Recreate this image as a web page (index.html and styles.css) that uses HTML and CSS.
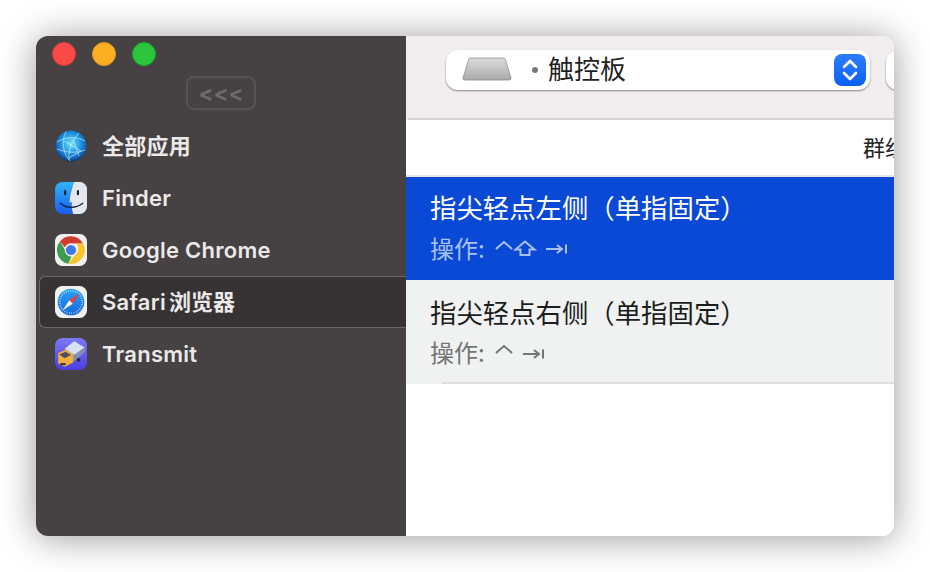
FILE: index.html
```html
<!DOCTYPE html>
<html lang="zh-CN">
<head>
  <meta charset="UTF-8">
  <title>触控板</title>
  <link rel="stylesheet" href="styles.css">
</head>
<body>
  <div class="window">

    <!-- Sidebar -->
    <aside class="sidebar">
      <div class="lights">
        <span class="light red"></span>
        <span class="light yellow"></span>
        <span class="light green"></span>
      </div>
      <button class="collapse">&lt;&lt;&lt;</button>

      <ul class="apps">
        <li class="app">
          <svg class="app-icon" viewBox="0 0 32 32">
            <defs>
              <radialGradient id="globe" cx="50%" cy="42%" r="60%">
                <stop offset="0" stop-color="#6fe4f4"/>
                <stop offset="0.55" stop-color="#1f92e4"/>
                <stop offset="0.85" stop-color="#125aa8"/>
                <stop offset="1" stop-color="#0a2c50"/>
              </radialGradient>
            </defs>
            <circle cx="16" cy="16" r="15.5" fill="url(#globe)"/>
            <g fill="none" stroke="#d4f6fc" stroke-width="0.8" opacity="0.8">
              <path d="M2 12 C10 7 22 6 30 11"/>
              <path d="M11 1.5 C6 12 8 23 15 31"/>
              <path d="M24 3 C17 10 13 20 14 30"/>
              <path d="M9 11 L26 21 L14 28"/>
              <path d="M18 9 L24 26"/>
              <path d="M2 19 C10 22 20 24 30 20"/>
            </g>
          </svg>
          <span class="app-name cjk">全部应用</span>
        </li>
        <li class="app">
          <svg class="app-icon" viewBox="1 1 30 30">
            <defs>
              <linearGradient id="finderBlue" x1="0" y1="0" x2="0" y2="1">
                <stop offset="0" stop-color="#2fb4f6"/>
                <stop offset="1" stop-color="#1a5cf0"/>
              </linearGradient>
              <clipPath id="finderClip"><rect x="1" y="1" width="30" height="30" rx="7"/></clipPath>
            </defs>
            <g clip-path="url(#finderClip)">
              <rect x="1" y="1" width="30" height="30" fill="url(#finderBlue)"/>
              <path d="M19 1 H31 V31 H18 C17 27 16.5 24 16.8 20 H14.6 C15 13 17 7 19 1 Z" fill="#e4e8ee"/>
            </g>
            <rect x="9.5" y="8.5" width="2" height="5" rx="1" fill="#14233f"/>
            <rect x="21.5" y="8.5" width="2" height="5" rx="1" fill="#14233f"/>
            <path d="M6 21 C11 26 21 26 27 21" fill="none" stroke="#14233f" stroke-width="1.3" stroke-linecap="round"/>
          </svg>
          <span class="app-name">Finder</span>
        </li>
        <li class="app">
          <svg class="app-icon" viewBox="1 1 30 30">
            <rect x="1" y="1" width="30" height="30" rx="7" fill="#f1f1f1"/>
            <path d="M16 3 A13 13 0 0 1 27.4 10 H16 A6 6 0 0 0 10.4 13.6 L5.6 8 A13 13 0 0 1 16 3 Z" fill="#d23c30"/>
            <path d="M5.6 8 L11 16.6 A6 6 0 0 0 16.5 22 L13.4 28.8 A13 13 0 0 1 5.6 8 Z" fill="#3f9c4a"/>
            <path d="M27.4 10 A13 13 0 0 1 13.4 28.8 L20.6 19.6 A6 6 0 0 0 20.5 10 Z" fill="#f8c72e"/>
            <circle cx="16" cy="16" r="6" fill="#f1f1f1"/>
            <circle cx="16" cy="16" r="4.8" fill="#3f78e8"/>
          </svg>
          <span class="app-name">Google Chrome</span>
        </li>
        <li class="app active">
          <svg class="app-icon" viewBox="1 1 30 30">
            <defs>
              <linearGradient id="safariBlue" x1="0" y1="0" x2="0" y2="1">
                <stop offset="0" stop-color="#2aa4f4"/>
                <stop offset="1" stop-color="#1466d8"/>
              </linearGradient>
            </defs>
            <rect x="1" y="1" width="30" height="30" rx="7" fill="#f0f0f0"/>
            <circle cx="16" cy="16" r="12.5" fill="url(#safariBlue)"/>
            <circle cx="16" cy="16" r="10.5" fill="none" stroke="#d9ecfb" stroke-width="1.6" stroke-dasharray="0.7 1.5"/>
            <path d="M24 8 L14.4 14.4 L17.6 17.6 Z" fill="#ee3b36"/>
            <path d="M8 24 L14.4 14.4 L17.6 17.6 Z" fill="#f4f4f4"/>
          </svg>
          <span class="app-name cjk">Safari<span class="name-cjk">浏览器</span></span>
        </li>
        <li class="app">
          <svg class="app-icon" viewBox="1 1 30 30">
            <defs>
              <linearGradient id="transmitBg" x1="0" y1="0" x2="0" y2="1">
                <stop offset="0" stop-color="#7d78f4"/>
                <stop offset="1" stop-color="#4a3fe0"/>
              </linearGradient>
            </defs>
            <rect x="1" y="1" width="30" height="30" rx="7" fill="url(#transmitBg)"/>
            <path d="M10 11 L19 4 L29 10 L19 17 Z" fill="#d5e2f4"/>
            <path d="M16 15.5 L19 17 L29 10 V14 L19 23 L16 21 Z" fill="#7f92b4"/>
            <path d="M4 15 L11 12 L18 16 V24 L10 28 L4 25 Z" fill="#f2ae3a"/>
            <path d="M5 16.5 L11 14 L16 17 L10 20 Z" fill="#4b4f60"/>
            <rect x="6" y="24.5" width="5" height="2" fill="#3a3340"/>
            <circle cx="23" cy="21.5" r="1.8" fill="#2a2a38"/>
          </svg>
          <span class="app-name">Transmit</span>
        </li>
      </ul>
    </aside>

    <!-- Main pane -->
    <main class="pane">
      <div class="toolbar">
        <div class="controls">
          <div class="select">
            <svg class="trackpad" viewBox="0 0 50 24">
              <defs>
                <linearGradient id="pad" x1="0" y1="0" x2="0" y2="1">
                  <stop offset="0" stop-color="#dcdcdc"/>
                  <stop offset="1" stop-color="#a9a9a9"/>
                </linearGradient>
              </defs>
              <path d="M8 1 H41 Q43 1 43.5 3 L49 21 Q49.5 23 47 23 H3 Q0.5 23 1 21 L6.5 3 Q7 1 8 1 Z" fill="url(#pad)" stroke="#8e8e8e" stroke-width="0.8"/>
            </svg>
            <span class="dot"></span>
            <span class="select-label">触控板</span>
            <span class="stepper">
              <svg viewBox="0 0 32 32">
                <path d="M10 13 L16 7 L22 13 M10 19 L16 25 L22 19" fill="none" stroke="#fff" stroke-width="2.6" stroke-linecap="round" stroke-linejoin="round"/>
              </svg>
            </span>
          </div>
          <div class="select"></div>
        </div>
        <div class="toolbar-line"></div>
      </div>

      <div class="table-head">
        <span class="group-label">群组</span>
      </div>

      <div class="row selected">
        <div class="row-title">指尖轻点左侧（单指固定）</div>
        <div class="row-sub">
          <span>操作:</span>
          <svg class="keys" width="72" height="16" viewBox="0 0 72 16" role="img" aria-label="⌃⇧ ⇥">
            <path d="M1 9 L9 2 L17 9"/>
            <path d="M30 1.5 L39.5 9.5 H34.5 V15 H25.5 V9.5 H20.5 Z"/>
            <path d="M51 9 H67 M62 5 L67 9 L62 13 M71 4.5 V13.5"/>
          </svg>
        </div>
      </div>
      <div class="row">
        <div class="row-title">指尖轻点右侧（单指固定）</div>
        <div class="row-sub">
          <span>操作:</span>
          <svg class="keys" width="49" height="16" viewBox="0 0 49 16" role="img" aria-label="⌃ ⇥">
            <path d="M1 9 L9 2 L17 9"/>
            <path d="M28 10 H44 M39 6 L44 10 L39 14 M48 5.5 V14.5"/>
          </svg>
        </div>
        <div class="row-line"></div>
      </div>
    </main>

  </div>
</body>
</html>
```
FILE: styles.css
```css
* {
  box-sizing: border-box;
}

html, body {
  margin: 0;
  height: 100%;
  overflow: hidden;
  background: #fff;
}

body {
  padding: 36px;
  font-family: "Inter", "Noto Sans CJK SC", sans-serif;
}

/* Window */
.window {
  display: flex;
  width: 858px;
  height: 500px;
  border-radius: 12px;
  overflow: hidden;
  box-shadow: 0 2px 36px rgba(0, 0, 0, 0.4);
}

/* Sidebar */
.sidebar {
  width: 370px;
  flex-shrink: 0;
  background: #464142;
  padding-top: 6px;
}

.lights {
  display: flex;
  gap: 16px;
  padding-left: 16px;
}

.light {
  width: 24px;
  height: 24px;
  border-radius: 50%;
}

.red { background: #fc4a47; border: 1px solid #e0393a; }
.yellow { background: #fdaf24; border: 1px solid #e09a1c; }
.green { background: #2ac53c; border: 1px solid #22a832; }

.collapse {
  display: block;
  width: 70px;
  height: 34px;
  margin: 10px 0 10px 150px;
  padding: 0;
  background: none;
  border: 2px solid #575353;
  border-radius: 8px;
  color: #6f6b6b;
  font-family: "Inter", sans-serif;
  font-size: 22px;
  font-weight: 700;
  line-height: 30px;
}

.apps {
  list-style: none;
  margin: 0;
  padding: 0;
}

.app {
  display: flex;
  align-items: center;
  height: 52px;
  padding-left: 19px;
  gap: 15px;
}

.app.active {
  margin-left: 3px;
  padding-left: 15px;
  background: #373334;
  border: 1px solid #6b6868;
  border-right: none;
  border-radius: 6px 0 0 6px;
}

.app-icon {
  width: 32px;
  height: 32px;
  flex-shrink: 0;
}

.app-name {
  color: #ebe9e9;
  font-size: 22px;
  font-weight: 600;
  letter-spacing: 0.25px;
  white-space: nowrap;
}

/* names with CJK sit lower in their line box */
.app-name.cjk {
  padding-bottom: 5px;
}

.name-cjk {
  margin-left: 3px;
  letter-spacing: 0;
}

/* Main pane */
.pane {
  flex: 1;
  min-width: 0;
  background: #fff;
  overflow: hidden;
}

.toolbar {
  display: flex;
  flex-direction: column;
  justify-content: space-between;
  height: 84px;
  padding-top: 14px;
  background: #f2edef;
}

.controls {
  display: flex;
  gap: 16px;
  padding-left: 40px;
}

.toolbar-line {
  height: 2px;
  margin-left: 2px;
  background: #d6d1d3;
}

.select {
  display: flex;
  align-items: center;
  flex-shrink: 0;
  width: 424px;
  height: 40px;
  padding: 0 4px 0 16px;
  background: #fff;
  border-radius: 12px;
  box-shadow: 0 1px 2px rgba(0, 0, 0, 0.45);
}

.trackpad {
  width: 50px;
  height: 24px;
  margin-bottom: 3px;
}

.dot {
  width: 6px;
  height: 6px;
  margin-left: 20px;
  border-radius: 50%;
  background: #777;
}

.select-label {
  margin-left: 10px;
  padding-bottom: 6px;
  color: #1f1f1f;
  font-family: "Noto Sans CJK SC", sans-serif;
  font-size: 26px;
}

.stepper {
  width: 32px;
  height: 32px;
  margin-left: auto;
  border-radius: 8px;
  background: linear-gradient(#2b7dff, #0a60f2);
}

.stepper svg {
  display: block;
}

.table-head {
  height: 57px;
  padding: 10px 0 0 457px;
  border-bottom: 2px solid #e8e6e7;
  white-space: nowrap;
}

.group-label {
  color: #222;
  font-family: "Noto Sans CJK SC", sans-serif;
  font-size: 22px;
}

/* Rows */
.row {
  display: flex;
  flex-direction: column;
  height: 104px;
  padding-top: 13px;
  background: #f0f2f2;
  color: #1d1d1d;
}

.row.selected {
  height: 103px;
  padding-top: 11px;
  background: #0a48d6;
  color: #fff;
}

.row-title {
  margin-bottom: 2px;
  padding-left: 24px;
  font-family: "Noto Sans CJK SC", sans-serif;
  font-size: 26.4px;
  line-height: 38px;
}

.selected .row-title {
  margin-bottom: 3px;
}

.row-sub {
  display: flex;
  align-items: center;
  gap: 10px;
  padding-left: 24px;
  height: 36px;
  color: #747575;
  font-family: "Noto Sans CJK SC", sans-serif;
  font-size: 24px;
}

.selected .row-sub {
  color: #a8c0f2;
}

.keys {
  margin-top: 2px;
  fill: none;
  stroke: currentColor;
  stroke-width: 2;
}

.row-line {
  height: 2px;
  margin: auto 0 0 36px;
  background: #dcdcdc;
}
```
